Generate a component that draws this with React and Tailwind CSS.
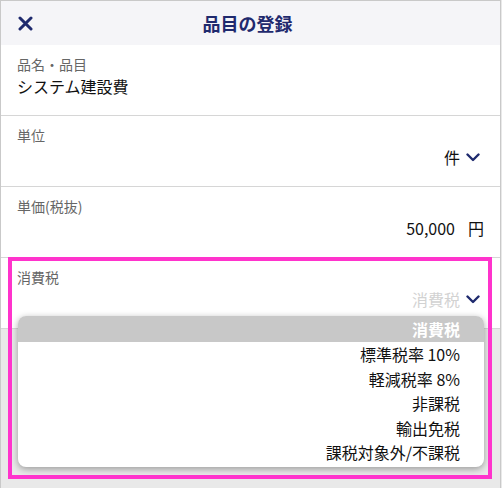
// Item registration sheet with the tax-type picker open

const navy = 'text-[#1f2a6e]'

const ChevronDown = () => (
  <svg width="14" height="9" viewBox="0 0 14 9" className={`ml-[6px] mr-[4px] ${navy}`}>
    <path d="M1.5 1.5 L7 7 L12.5 1.5" fill="none" stroke="currentColor" strokeWidth="2.4" strokeLinecap="round" strokeLinejoin="round" />
  </svg>
)

const CloseIcon = () => (
  <svg width="15" height="15" viewBox="0 0 15 15" className={navy}>
    <path d="M2 2 L13 13 M13 2 L2 13" fill="none" stroke="currentColor" strokeWidth="3" strokeLinecap="round" />
  </svg>
)

const Field = ({ label, children }) => (
  <div className="h-[71px] border-b border-[#d6d6d6] bg-white pl-[16px] pr-[16px] pt-[9px]">
    <div className="text-[14px] leading-[20px] text-[#666666]">{label}</div>
    <div className="text-[16px] leading-[24px] text-[#111111]">{children}</div>
  </div>
)

const taxOptions = ['標準税率 10%', '軽減税率 8%', '非課税', '輸出免税', '課税対象外/不課税']

export default function App() {
  return (
    <div
      className="relative h-[488px] w-[502px] overflow-hidden bg-[#e9e9e9]"
      style={{ fontFamily: '"Noto Sans CJK JP", "Noto Sans", sans-serif' }}
    >
      <div className="h-full w-[501px] border-x border-t border-[#c9c9c9]">
        <header className="flex h-[44px] items-center bg-[#f5f5f8] pl-[17px] pr-[24px]">
          <CloseIcon />
          <h1 className={`flex-1 pr-[14px] text-center text-[18px] font-bold ${navy}`}>品目の登録</h1>
        </header>

        <Field label="品名・品目">システム建設費</Field>

        <Field label="単位">
          <div className="flex items-center justify-end">
            <span>件</span>
            <ChevronDown />
          </div>
        </Field>

        <Field label="単価(税抜)">
          <div className="flex items-center justify-end">
            <span>50,000</span>
            <span className="ml-[13px]">円</span>
          </div>
        </Field>

        <Field label="消費税">
          <div className="flex items-center justify-end">
            <span className="text-[#d2d2d2]">消費税</span>
            <ChevronDown />
          </div>
        </Field>
      </div>

      {/* picker list */}
      <div className="absolute left-[18px] top-[316px] h-[151px] w-[466px] overflow-hidden rounded-[8px] bg-white shadow-[0_2px_7px_rgba(0,0,0,0.35)]">
        <div className="h-[26px] bg-[#c8c8c8] pr-[24px] text-right text-[16px] font-bold leading-[26px] text-white">
          消費税
        </div>
        {taxOptions.map((opt) => (
          <div key={opt} className="pr-[24px] text-right text-[16px] leading-[24.5px] text-[#111111]">
            {opt}
          </div>
        ))}
      </div>

      {/* highlight frame */}
      <div className="pointer-events-none absolute left-[8px] top-[257px] h-[222px] w-[484px] border-4 border-[#ff33cc]" />
    </div>
  )
}
